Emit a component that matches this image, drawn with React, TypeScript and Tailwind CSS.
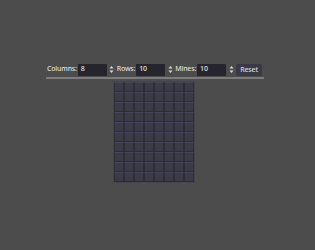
const COLS = 8;
const ROWS = 10;

function Spinner() {
  return (
    <div className="w-[10px] flex justify-center shrink-0">
      <svg width="5" height="9" viewBox="0 0 5 9">
        <path d="M0.5 3.5 L2.5 1 L4.5 3.5 Z" fill="#d8d8d8" />
        <path d="M0.5 5.5 L2.5 8 L4.5 5.5 Z" fill="#d8d8d8" />
      </svg>
    </div>
  );
}

function NumberField({ label, value }: { label: string; value: number }) {
  return (
    <div className="flex items-center shrink-0">
      <span className="whitespace-nowrap mr-[1px]">{label}</span>
      <div className="h-[12px] w-[29px] bg-[#26252e] rounded-[1px] flex items-center pl-[3px] text-[#e4e4e4]">
        {value}
      </div>
      <Spinner />
    </div>
  );
}

export default function App() {
  return (
    <div
      className="w-[315px] h-[250px] bg-[#4c4c4c] overflow-hidden text-[7px] tracking-[-0.2px] font-medium text-[#dedede]"
      style={{ fontFamily: '"Noto Sans", sans-serif' }}
    >
      <div className="ml-[46px] mt-[63px] w-[218px] flex flex-col items-center">
        <div className="w-full flex items-center h-[13px] pl-[1px]">
          <NumberField label="Columns:" value={8} />
          <NumberField label="Rows:" value={10} />
          <NumberField label="Mines:" value={10} />
          <button className="h-[12px] w-[26px] shrink-0 bg-[#3a3945] rounded-[2px] text-[#d8d8d8] leading-none">
            Reset
          </button>
        </div>
        <div className="w-full h-[2px] bg-[#7c7c7c] mt-[1px]" />
        <div className="mt-[2px] p-[1px] bg-[#45444d] grid grid-cols-8 w-[82px] ml-[-2px]">
          {Array.from({ length: COLS * ROWS }).map((_, i) => (
            <div
              key={i}
              className="h-[10px] w-[10px] bg-[#3b3a47] border border-[#2e2d37] border-t-[#46455a]"
            />
          ))}
        </div>
      </div>
    </div>
  );
}
